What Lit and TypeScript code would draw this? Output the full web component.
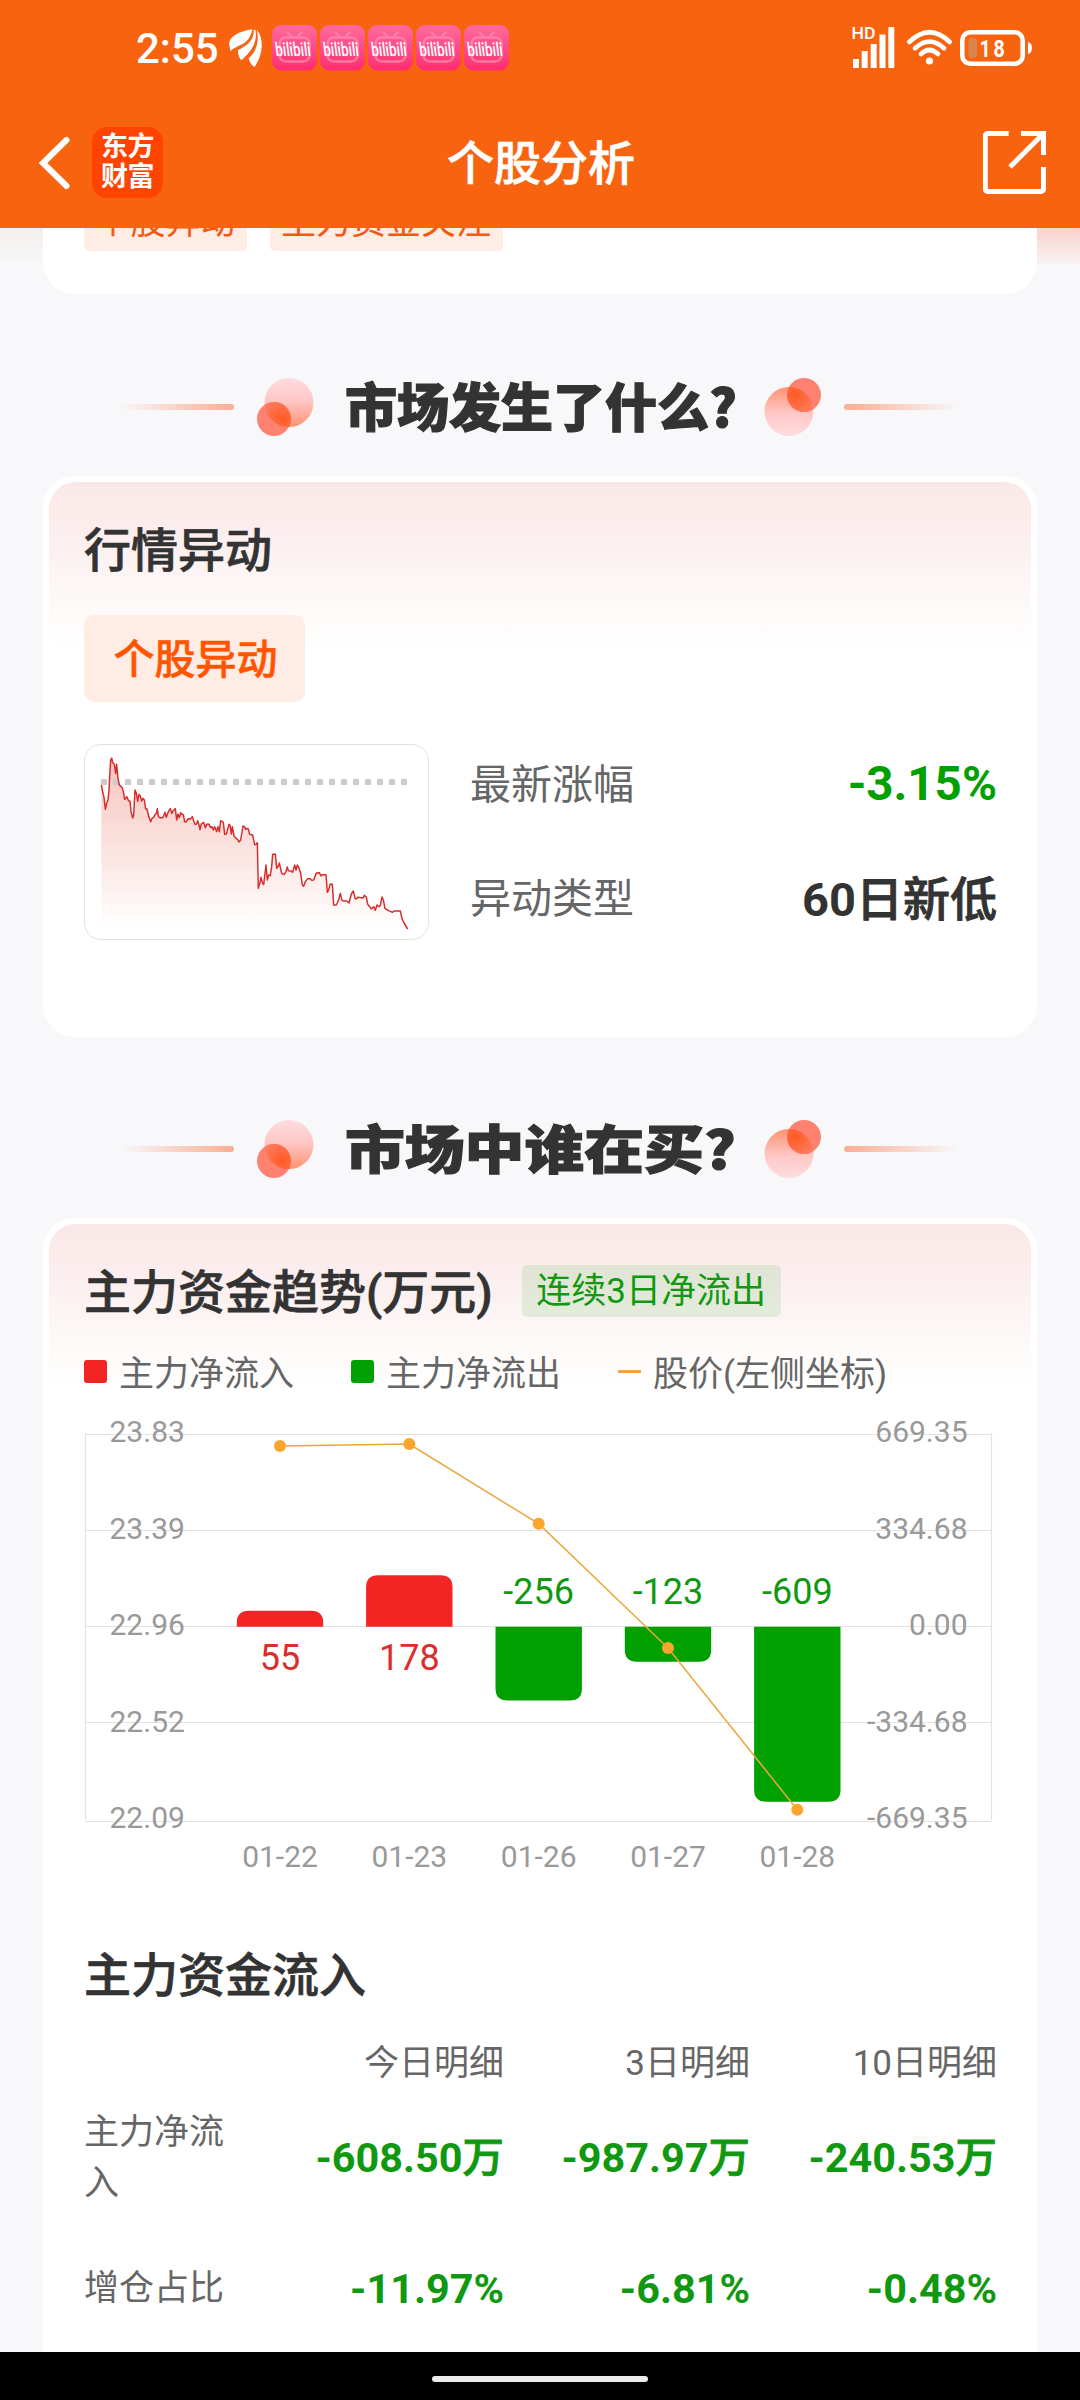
import { LitElement, html, css, svg } from "lit";
import { customElement, property } from "lit/decorators.js";

interface DayFlow {
  date: string;
  x: number;
  value: number;
  edge: number;
  priceY: number;
}

const ZERO_Y = 1626.5;

const days: DayFlow[] = [
  { date: "01-22", x: 280, value: 55, edge: 1610.7, priceY: 1446 },
  { date: "01-23", x: 409.3, value: 178, edge: 1575.3, priceY: 1444 },
  { date: "01-26", x: 538.7, value: -256, edge: 1700.5, priceY: 1523.7 },
  { date: "01-27", x: 668, value: -123, edge: 1661.7, priceY: 1648 },
  { date: "01-28", x: 797.3, value: -609, edge: 1801.7, priceY: 1809.7 },
];

const axis = [
  { y: 1434.5, base: 1441.7, left: "23.83", right: "669.35" },
  { y: 1530.5, base: 1538.5, left: "23.39", right: "334.68" },
  { y: 1626.5, base: 1634.8, left: "22.96", right: "0.00" },
  { y: 1722.5, base: 1731.8, left: "22.52", right: "-334.68" },
  { y: 1821.5, base: 1827.8, left: "22.09", right: "-669.35" },
];

const trend =
  "124,195 128,215 132,232 136,268 140,250 144,240 147,210 150,150 152,120 155,114 158,128 163,133 167,160 170,133 174,175 178,195 186,202 190,215 194,238 200,230 206,243 210,243 213,275 218,294 221,285 225,210 229,220 233,244 237,223 241,228 245,243 249,235 253,240 257,267 261,267 266,288 272,305 276,295 281,292 285,283 289,281 292,266 295,288 299,293 308,293 311,288 315,277 319,292 325,275 331,266 335,280 341,270 346,266 350,300 354,282 358,293 362,278 366,283 370,284 374,305 378,306 385,296 391,297 397,290 401,303 405,313 409,313 413,302 417,315 420,329 424,312 431,307 436,323 441,312 447,313 452,323 456,320 460,330 464,320 470,335 474,320 478,335 482,302 490,307 494,343 499,342 507,313 510,315 514,342 517,320 522,348 528,355 533,358 537,366 542,360 549,318 554,320 557,328 561,325 565,327 569,343 578,345 584,374 588,373 592,368 595,505 600,488 603,472 607,488 611,494 618,435 622,480 626,465 631,467 635,440 638,403 646,403 650,445 654,440 658,429 665,460 672,464 678,455 682,441 685,452 693,453 698,457 704,435 708,450 712,435 716,442 722,460 727,495 731,499 736,485 743,476 751,476 755,481 761,480 769,459 778,458 783,468 787,464 798,464 802,517 806,510 810,493 817,493 821,555 829,555 836,540 841,520 846,541 852,543 860,543 867,549 874,522 880,513 885,535 889,537 893,532 909,534 913,526 919,531 923,553 929,560 934,567 941,560 946,571 951,555 956,560 961,556 966,531 970,540 975,565 985,572 993,575 997,577 1002,573 1021,573 1026,596 1032,609 1043,627";

/** Status bar with the clock, notification icons and system indicators. */
@customElement("status-bar")
class StatusBar extends LitElement {
  static styles = css`
    :host { display: flex; height: 98px; padding: 0 47px 0 136px; box-sizing: border-box; justify-content: space-between; color: #fff; }
    .left, .right { display: flex; align-items: flex-start; }
    .clock { font-size: 42px; font-weight: 500; line-height: 48px; width: 93px; padding-top: 25px; }
    .wing { width: 33px; height: 38px; margin: 29px 9.6px 0 0; }
    .bili { width: 45px; height: 46px; margin: 25px 3px 0 0; }
    .signal { width: 44px; height: 44px; margin: 25px 11px 0 0; }
    .wifi { width: 45px; height: 36px; margin: 30px 8px 0 0; }
    .battery { width: 73px; height: 36px; margin-top: 30px; }
    svg { display: block; flex: none; overflow: visible; }
  `;

  private bili() {
    return html`<svg class="bili" viewBox="0 0 45 46">
      <defs><linearGradient id="pink" x1="0" y1="0" x2="0" y2="1"><stop offset="0" stop-color="#ff6b9d" /><stop offset="1" stop-color="#ff2d70" /></linearGradient></defs>
      <rect width="45" height="45.5" rx="9.5" fill="url(#pink)" />
      <g fill="none" stroke="#ff8db3" stroke-width="2.4" stroke-linecap="round" opacity=".75">
        <rect x="7.5" y="12.5" width="30" height="24" rx="6" />
        <path d="M15.500 7.500l4 4M29.500 7.500l-4 4" />
      </g>
      <g transform="translate(4 30.500) skewX(7)"><text x="0" y="0" textLength="35.500" lengthAdjust="spacingAndGlyphs" font-size="19" font-weight="500" fill="#fff">bilibili</text></g>
    </svg>`;
  }

  render() {
    return html`
      <div class="left">
        <span class="clock">2:55</span>
        <svg class="wing" viewBox="600 28 96 112" preserveAspectRatio="none" fill="#fff">
          <path d="M668 29C632 34 602 50 600 70L604 93C628 72 658 78 668 29z" />
          <path d="M672 30C674 64 648 79 626 90C626 104 630 114 636 120C660 98 684 70 677 31z" />
          <path d="M681 30C690 70 676 98 657 114C660 126 666 134 674 140C692 116 708 64 681 30z" />
        </svg>
        ${[0, 1, 2, 3, 4].map(() => this.bili())}
      </div>
      <div class="right">
        <svg class="signal" viewBox="852 25 44 44" fill="#fff">
          <text x="851.5" y="38.5" font-size="17" font-weight="500" textLength="24" lengthAdjust="spacingAndGlyphs">HD</text>
          <rect x="853" y="59" width="6" height="9" /><rect x="861.7" y="51" width="6" height="17" />
          <rect x="870.7" y="44" width="6" height="24" /><rect x="879.5" y="34.5" width="6" height="33.5" />
          <rect x="888.3" y="27" width="6" height="41" rx="1" />
        </svg>
        <svg class="wifi" viewBox="907 30 45 36" fill="none" stroke="#fff" stroke-width="4.6" stroke-linecap="round">
          <path d="M909.3 42Q929.5 22.5 949.7 42M915 48.3Q929.5 35 944 48.3M921 54Q929.5 46 938 54" />
          <circle cx="929.5" cy="61" r="3.6" fill="#fff" stroke="none" />
        </svg>
        <svg class="battery" viewBox="960 30 73 36">
          <rect x="962.3" y="32.3" width="60.4" height="31.4" rx="8" fill="none" stroke="#fff" stroke-width="4.6" />
          <path d="M1028 42q4 1 4 6t-4 6z" fill="#fff" />
          <rect x="968.5" y="38" width="8.5" height="20" rx="3" fill="#d98450" />
          <g transform="translate(979.500 56.500) scale(.82 1)"><text x="0" y="0" font-size="24" font-weight="700" fill="#fff" textLength="31">18</text></g>
        </svg>
      </div>
    `;
  }
}

/** Navigation bar: back arrow, brand badge, page title and share button. */
@customElement("nav-bar")
class NavBar extends LitElement {
  static styles = css`
    :host { display: grid; grid-template-columns: 1fr auto 1fr; align-items: center; height: 130px; padding: 0 34px 0 38px; box-sizing: border-box; color: #fff; }
    .left { display: flex; align-items: center; gap: 22px; }
    .badge { width: 71px; height: 71px; border-radius: 15px; background: #ff4400; display: flex; flex-direction: column; align-items: center; justify-content: center; font-size: 27px; font-weight: 700; line-height: 30px; letter-spacing: -0.5px; margin-top: -2px; }
    .badge span { display: block; }
    .title { font-size: 47px; font-weight: 500; line-height: 60px; padding: 2px 2px 0 0; -webkit-text-stroke: 0.7px #fff; }
    .share { justify-self: end; display: block; width: 64px; height: 64px; margin-right: -1px; }
    svg { display: block; }
  `;

  render() {
    return html`
      <div class="left">
        <svg width="32" height="54" viewBox="37 136 32 54" fill="none" stroke="#fff" stroke-width="6" stroke-linecap="round"><path d="M65.500 140L42 163L65.500 186" /></svg>
        <div class="badge"><span>东方</span><span>财富</span></div>
      </div>
      <div class="title">个股分析</div>
      <svg class="share" viewBox="983 131 64 64" fill="none" stroke="#fff" stroke-width="5">
        <path d="M1008.7 133.5H987.5a2.2 2.2 0 0 0-2.2 2.2V189.300a2.200 2.200 0 0 0 2.200 2.200H1041.300a2.200 2.200 0 0 0 2.200-2.200V167M1021 133.500H1043.500V155M1043 134L1010 167" />
      </svg>
    `;
  }
}

/** Decorated heading that separates the page sections. */
@customElement("section-heading")
class SectionHeading extends LitElement {
  @property() text = "";
  @property({ type: Number }) stretch = 1;

  static styles = css`
    :host { display: flex; align-items: center; justify-content: center; height: 138px; padding: 44px 2px 0 0; }
    .line { width: 114px; height: 6px; border-radius: 3px; background: linear-gradient(90deg, rgba(252, 160, 130, 0), #faad93); }
    .line.end { background: linear-gradient(270deg, rgba(252, 160, 130, 0), #faad93); }
    .orb { width: 57px; height: 58px; margin: 0 31px 0 23px; overflow: visible; flex: none; }
    .orb.end { transform: rotate(180deg); margin: 0 23px 0 30px; }
    .label { width: 389px; font-size: 52px; line-height: 60px; margin-top: -4px; color: #333; font-weight: 900; white-space: nowrap; font-family: "Noto Sans CJK SC", sans-serif; -webkit-text-stroke: 1.2px #333; }
    .label span { display: inline-block; transform-origin: 0 50%; }
  `;

  private orb(cls: string) {
    return html`<svg class=${cls} viewBox="0 0 57 58">
      <defs>
        <linearGradient id="big" x1="0" y1="0" x2="0" y2="1"><stop offset="0" stop-color="#ffdce0" /><stop offset=".45" stop-color="#fec8c6" /><stop offset="1" stop-color="#ff9272" /></linearGradient>
        <radialGradient id="mix" cx=".75" cy=".5" r=".7"><stop offset="0" stop-color="#ff5a24" /><stop offset="1" stop-color="#ff8068" /></radialGradient>
        <clipPath id="cut"><circle cx="32" cy="24.5" r="24.5" /></clipPath>
      </defs>
      <circle cx="32" cy="24.5" r="24.5" fill="url(#big)" />
      <circle cx="17" cy="41" r="17" fill="#ff816f" />
      <circle cx="17" cy="41" r="17" fill="url(#mix)" clip-path="url(#cut)" />
    </svg>`;
  }

  render() {
    return html`
      <i class="line"></i>${this.orb("orb")}
      <div class="label"><span style="transform:scaleX(${this.stretch})">${this.text}</span></div>
      ${this.orb("orb end")}<i class="line end"></i>
    `;
  }
}

/** Intraday price sparkline. */
@customElement("mini-trend")
class MiniTrend extends LitElement {
  static styles = css`
    :host { display: block; width: 345px; height: 196px; box-sizing: border-box; border: 1px solid #e2e2e2; border-radius: 17px; background: #fff; }
    svg { display: block; width: 343px; height: 194px; }
  `;

  render() {
    return html`<svg viewBox="75 75 1029 582">
      <defs><linearGradient id="area" gradientUnits="userSpaceOnUse" x1="0" y1="114" x2="0" y2="627"><stop offset="0" stop-color="#f6c4bd" /><stop offset="1" stop-color="#f6c4bd" stop-opacity="0" /></linearGradient></defs>
      <polygon points="124,627 ${trend}" fill="url(#area)" />
      <path d="M123 186H1043" stroke="#ccc" stroke-width="18" stroke-dasharray="18 18" />
      <polyline points=${trend} fill="none" stroke="#d92b2b" stroke-width="4.4" stroke-linejoin="round" />
    </svg>`;
  }
}

/** Net capital flow bars with the closing price overlaid. */
@customElement("flow-chart")
class FlowChart extends LitElement {
  static styles = css`
    :host { display: block; width: 912px; height: 470px; }
    svg { display: block; }
    .axis { font-size: 30px; fill: #999; }
    .value { font-size: 36px; text-anchor: middle; }
    .up { fill: #dc2c2c; }
    .down { fill: #109910; }
    .end { text-anchor: end; }
    .mid { text-anchor: middle; }
  `;

  private bar(d: DayFlow) {
    const l = d.x - 43.2;
    const r = d.x + 43.2;
    const c = 12;
    const k = d.value > 0 ? c : -c;
    return svg`<path fill=${d.value > 0 ? "#f22424" : "#00a000"}
      d="M${l} ${ZERO_Y + 0.3}V${d.edge + k}Q${l} ${d.edge} ${l + c} ${d.edge}H${r - c}Q${r} ${d.edge} ${r} ${d.edge + k}V${ZERO_Y + 0.3}z" />`;
  }

  render() {
    return html`<svg width="912" height="470" viewBox="84 1410 912 470">
      <g stroke="#e2e2e2" stroke-width="1.2" fill="none">
        ${axis.map((a) => svg`<path d="M85.500 ${a.y}H991.500" />`)}
        <path d="M85.500 1433V1820M991.500 1433V1820" />
      </g>
      ${axis.map(
        (a) => svg`<text class="axis" x="109.500" y=${a.base}>${a.left}</text>
        <text class="axis end" x="967.500" y=${a.base}>${a.right}</text>`,
      )}
      ${days.map((d) => this.bar(d))}
      ${days.map(
        (d) => svg`<text class="value ${d.value > 0 ? "up" : "down"}" x=${d.x} y=${d.value > 0 ? 1670 : 1604}>${d.value}</text>
        <text class="axis mid" x=${d.x} y="1866.700">${d.date}</text>`,
      )}
      <polyline points=${days.map((d) => `${d.x},${d.priceY}`).join(" ")} fill="none" stroke="#eba63c" stroke-width="1.500" />
      ${days.map((d) => svg`<circle cx=${d.x} cy=${d.priceY} r="6" fill="#faa52d" />`)}
    </svg>`;
  }
}

@customElement("app-root")
class AppRoot extends LitElement {
  static styles = css`
    :host { display: flex; flex-direction: column; width: 1080px; height: 2400px; overflow: hidden; background: #f8f8fa; color: #333; font-family: Roboto, "Noto Sans CJK SC", sans-serif; }
    .top { background: #f86310; height: 228px; flex: none; }
    .page { height: 2124px; flex: none; overflow: hidden; padding: 0 43px; box-sizing: border-box; background: linear-gradient(180deg, #f9d2cd, #f7f2f1) 1037px 0 / 43px 36px no-repeat, linear-gradient(180deg, #f4eeeb, #f8f8fa) 0 0 / 43px 36px no-repeat, #f8f8fa; }
    .card { background: #fff; border: 6px solid #fff; border-radius: 32px; box-sizing: border-box; padding: 0 35px; }
    .tail { height: 66px; border-top: 0; border-radius: 0 0 32px 32px; }
    .tags { display: flex; gap: 22.500px; height: 22.6px; align-items: flex-end; }
    .tag { font-size: 35px; line-height: 56px; padding: 3px 11.500px 0; background: #ffede5; color: #f4590f; border-radius: 5px; }
    .tint { background: linear-gradient(180deg, #fae8e8 0, #fcefef 60px, #fdf7f7 105px, #fefcfb 140px, #fff 165px) padding-box, #fff; }
    .move { height: 561px; margin-bottom: -1px; padding-top: 37px; }
    h2 { margin: 0; font-size: 47px; font-weight: 500; line-height: 64px; -webkit-text-stroke: 0.7px #333; }
    .pill { display: inline-block; margin-top: 32px; width: 221px; height: 87px; border-radius: 10px; background: #ffede5; color: #ff5500; font-size: 41px; font-weight: 500; line-height: 90px; text-align: center; text-indent: 2px; -webkit-text-stroke: 0.5px #ff5500; }
    .quote { display: flex; gap: 41px; margin-top: 42px; }
    .facts { flex: 1; display: flex; flex-direction: column; gap: 48px; padding-top: 4px; margin-right: -1px; }
    .fact { display: flex; justify-content: space-between; align-items: center; height: 66px; font-size: 41px; color: #666; }
    .fact b { font-size: 47px; font-weight: 700; color: #333; }
    .fact b.down { color: #00a000; padding-top: 6px; font-size: 47.5px; }
    .cn { font-weight: 500; -webkit-text-stroke: 0.9px currentColor; }
    .fund { height: 1200px; padding-top: 36px; }
    .head { display: flex; align-items: center; gap: 29px; height: 64px; }
    .head h2 { padding-top: 1px; }
    .chip { font-size: 35px; line-height: 54px; height: 52px; width: 259px; text-align: center; background: rgba(0, 160, 0, 0.1); color: #109910; border-radius: 5px; margin-top: -3px; }
    .legend { display: flex; align-items: center; height: 48px; margin-top: 24px; font-size: 35px; color: #666; }
    .key { width: 23px; height: 23px; border-radius: 3px; margin: -1px 12px 0 0; }
    .key.in { background: #f22424; }
    .key.out { background: #00a000; }
    .key.price { height: 3px; border-radius: 0; background: #f0a63c; }
    .legend span { margin: -4px 57px 0 0; }
    flow-chart { margin-top: 14px; }
    .flow-title { margin-top: 64px; }
    .table { display: grid; grid-template-columns: 146px 273px 246px 247px; align-items: center; text-align: right; font-size: 35px; color: #666; grid-template-rows: 52px 138px 128px; margin: 25px -1px 0 1px; }
    .table .name { text-align: left; line-height: 51px; margin-left: -1px; padding-top: 3px; }
    .table .name.two { padding-top: 7px; }
    .table b { color: #109910; font-size: 41.4px; font-weight: 700; }
    .table b.ratio { padding-top: 3px; }
    .gesture { height: 48px; flex: none; background: #000; display: flex; justify-content: center; align-items: center; }
    .gesture i { width: 216px; height: 6px; border-radius: 3px; background: #ebebeb; margin-top: 6px; }
  `;

  private amount(value: string) {
    return html`<b>${value}<span class="cn">万</span></b>`;
  }

  render() {
    return html`
      <div class="top"><status-bar></status-bar><nav-bar></nav-bar></div>
      <div class="page">
        <div class="card tail">
          <div class="tags"><span class="tag">个股异动</span><span class="tag">主力资金关注</span></div>
        </div>
        <section-heading text="市场发生了什么?"></section-heading>
        <div class="card tint move">
          <h2>行情异动</h2>
          <div class="pill">个股异动</div>
          <div class="quote">
            <mini-trend></mini-trend>
            <div class="facts">
              <div class="fact"><span>最新涨幅</span><b class="down">-3.15%</b></div>
              <div class="fact"><span>异动类型</span><b>60<span class="cn">日新低</span></b></div>
            </div>
          </div>
        </div>
        <section-heading text="市场中谁在买?" stretch="1.15"></section-heading>
        <div class="card tint fund">
          <div class="head"><h2>主力资金趋势(万元)</h2><span class="chip">连续3日净流出</span></div>
          <div class="legend">
            <i class="key in"></i><span>主力净流入</span>
            <i class="key out"></i><span>主力净流出</span>
            <i class="key price"></i><span>股价(左侧坐标)</span>
          </div>
          <flow-chart></flow-chart>
          <h2 class="flow-title">主力资金流入</h2>
          <div class="table">
            <span></span><span>今日明细</span><span>3日明细</span><span>10日明细</span>
            <span class="name two">主力净流入</span>${["-608.50", "-987.97", "-240.53"].map((v) => this.amount(v))}
            <span class="name">增仓占比</span>${["-11.97%", "-6.81%", "-0.48%"].map((v) => html`<b class="ratio">${v}</b>`)}
          </div>
        </div>
      </div>
      <div class="gesture"><i></i></div>
    `;
  }
}
